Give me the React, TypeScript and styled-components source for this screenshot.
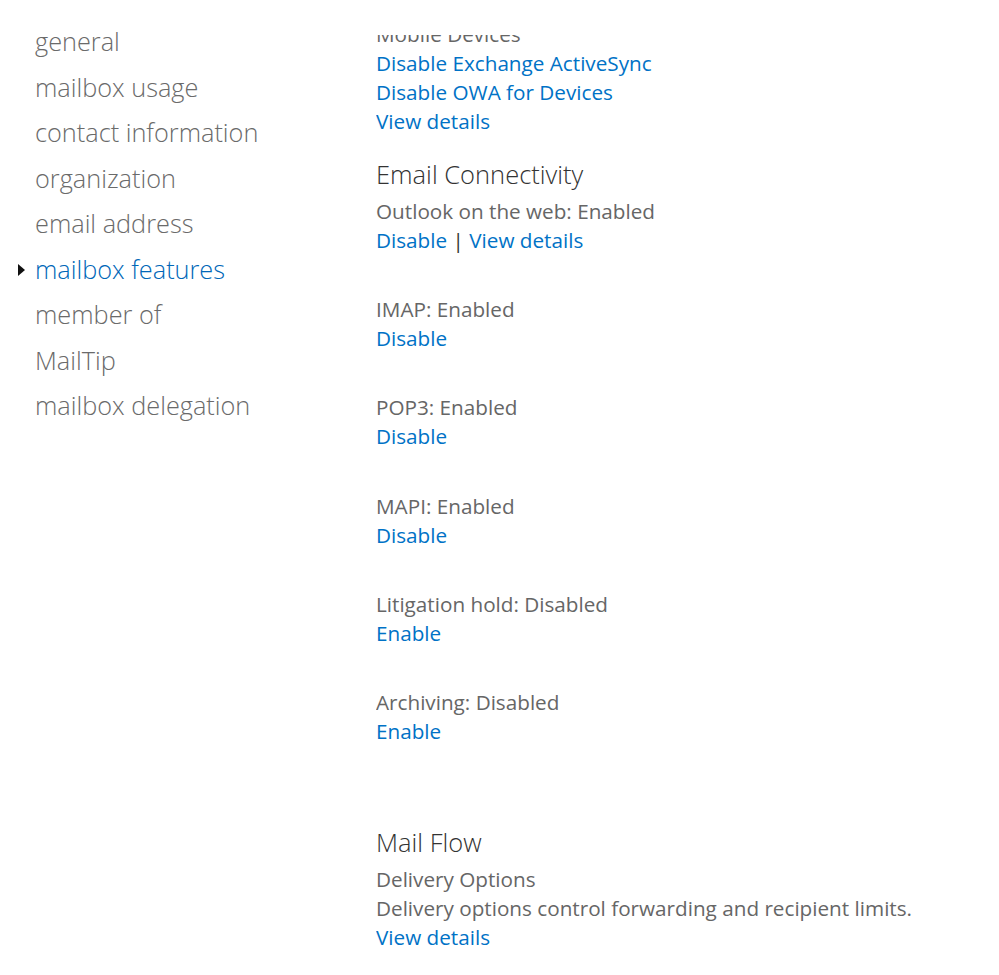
import React from "react";
import styled, { createGlobalStyle } from "styled-components";

const Global = createGlobalStyle`
  html, body { margin: 0; padding: 0; background: #fff; }
  body { font-family: "Open Sans", "Noto Sans", sans-serif; }
`;

const Page = styled.div`
  display: flex;
  align-items: flex-start;
  width: 999px;
  height: 975px;
  overflow: hidden;
`;

const Nav = styled.ul`
  list-style: none;
  margin: 0;
  padding: 19px 0 0 35px;
  width: 376px;
  flex-shrink: 0;
  box-sizing: border-box;
`;

const NavItem = styled.li<{ active?: boolean }>`
  position: relative;
  font-size: 25.3px;
  font-weight: 300;
  line-height: 45.5px;
  color: ${(p) => (p.active ? "#0067b8" : "#6a6a6a")};
  white-space: nowrap;

  ${(p) =>
    p.active &&
    `&::before {
      content: "";
      position: absolute;
      left: -17px;
      top: 17px;
      border-left: 7px solid #111;
      border-top: 6px solid transparent;
      border-bottom: 6px solid transparent;
    }`}
`;

const ScrollPane = styled.div`
  margin-top: 35px;
  height: 940px;
  overflow: hidden;
  flex: 1;
`;

const Content = styled.div`
  display: flex;
  flex-direction: column;
  margin-top: -15.5px;
`;

const Line = styled.div`
  font-size: 20.7px;
  line-height: 29px;
  color: #666;
  white-space: nowrap;
`;

const Link = styled.a`
  color: #0072c6;
  text-decoration: none;
  cursor: pointer;
`;

const LinkLine = styled.div`
  font-size: 20.7px;
  line-height: 29px;
  color: #333;
  white-space: nowrap;
`;

const Heading = styled.div<{ top: number; bottom: number }>`
  font-size: 25.5px;
  font-weight: 300;
  color: #333;
  line-height: 36px;
  margin-top: ${(p) => p.top}px;
  margin-bottom: ${(p) => p.bottom}px;
`;

const Group = styled.div`
  margin-bottom: 40.2px;
`;

const navItems = [
  "general",
  "mailbox usage",
  "contact information",
  "organization",
  "email address",
  "mailbox features",
  "member of",
  "MailTip",
  "mailbox delegation",
];

const connectivity = [
  { label: "IMAP: Enabled", action: "Disable" },
  { label: "POP3: Enabled", action: "Disable" },
  { label: "MAPI: Enabled", action: "Disable" },
  { label: "Litigation hold: Disabled", action: "Enable" },
  { label: "Archiving: Disabled", action: "Enable" },
];

export default function App() {
  return (
    <Page>
      <Global />
      <Nav>
        {navItems.map((n) => (
          <NavItem key={n} active={n === "mailbox features"}>
            {n}
          </NavItem>
        ))}
      </Nav>
      <ScrollPane>
        <Content>
          <Line>Mobile Devices</Line>
          <LinkLine>
            <Link>Disable Exchange ActiveSync</Link>
          </LinkLine>
          <LinkLine>
            <Link>Disable OWA for Devices</Link>
          </LinkLine>
          <LinkLine>
            <Link>View details</Link>
          </LinkLine>

          <Heading top={20.5} bottom={5}>Email Connectivity</Heading>
          <Group>
            <Line>Outlook on the web: Enabled</Line>
            <LinkLine>
              <Link>Disable</Link> | <Link>View details</Link>
            </LinkLine>
          </Group>
          {connectivity.map((c) => (
            <Group key={c.label}>
              <Line>{c.label}</Line>
              <LinkLine>
                <Link>{c.action}</Link>
              </LinkLine>
            </Group>
          ))}

          <Heading top={37.6} bottom={5.5}>Mail Flow</Heading>
          <Line>Delivery Options</Line>
          <Line>Delivery options control forwarding and recipient limits.</Line>
          <LinkLine>
            <Link>View details</Link>
          </LinkLine>
        </Content>
      </ScrollPane>
    </Page>
  );
}
